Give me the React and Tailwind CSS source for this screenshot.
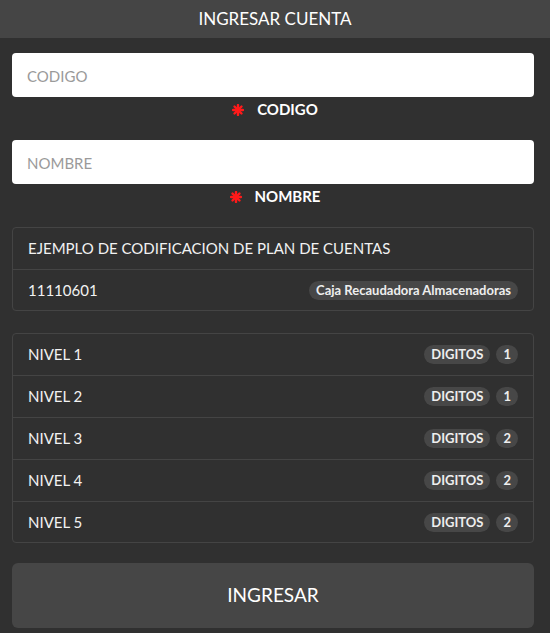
const niveles = [
  { nivel: 'NIVEL 1', digitos: 1 },
  { nivel: 'NIVEL 2', digitos: 1 },
  { nivel: 'NIVEL 3', digitos: 2 },
  { nivel: 'NIVEL 4', digitos: 2 },
  { nivel: 'NIVEL 5', digitos: 2 },
]

function Asterisk() {
  return (
    <svg width="12" height="12" viewBox="0 0 12 12" className="shrink-0">
      <g stroke="#ff1a1a" strokeWidth="2.4" strokeLinecap="round">
        <line x1="6" y1="1" x2="6" y2="11" />
        <line x1="1" y1="6" x2="11" y2="6" />
        <line x1="2.5" y1="2.5" x2="9.5" y2="9.5" />
        <line x1="9.5" y1="2.5" x2="2.5" y2="9.5" />
      </g>
    </svg>
  )
}

function Field({ placeholder, label }) {
  return (
    <div className="mb-[19px]">
      <input
        className="w-full h-[44px] bg-white rounded-[4px] px-[15px] pt-[1px] text-[15px] text-gray-700 placeholder:text-[#9a9a9a] outline-none"
        placeholder={placeholder}
      />
      <div className="flex items-center justify-center gap-[13px] h-[24px] pt-[1px] pl-[4px]">
        <Asterisk />
        <span className="text-[15px] font-bold text-white">{label}</span>
      </div>
    </div>
  )
}

function Badge({ children }) {
  return (
    <span className="inline-flex items-center h-[19px] px-[7px] rounded-full bg-[#474747] text-[13px] font-bold text-[#eeeeee] leading-none">
      {children}
    </span>
  )
}

export default function App() {
  return (
    <div className="w-[550px] h-[633px] bg-[#303030] text-[#f2f2f2]" style={{ fontFamily: 'Lato, "Open Sans", sans-serif' }}>
      <header className="h-[38px] bg-[#454545] flex items-center justify-center">
        <h1 className="text-[17px] text-white">INGRESAR CUENTA</h1>
      </header>

      <div className="pl-[12px] pr-[16px] pt-[15px]">
        <Field placeholder="CODIGO" label="CODIGO" />
        <Field placeholder="NOMBRE" label="NOMBRE" />

        {/* Ejemplo */}
        <div className="border border-[#444] rounded-[4px]">
          <div className="h-[42px] flex items-center px-[15px] border-b border-[#444] text-[15px]">
            EJEMPLO DE CODIFICACION DE PLAN DE CUENTAS
          </div>
          <div className="h-[40px] flex items-center justify-between px-[15px] text-[15px]">
            <span>11110601</span>
            <Badge>Caja Recaudadora Almacenadoras</Badge>
          </div>
        </div>

        {/* Niveles */}
        <div className="border border-[#444] rounded-[4px] mt-[22px]">
          {niveles.map((n, i) => (
            <div
              key={n.nivel}
              className={`flex items-center justify-between px-[15px] text-[15px] ${i < niveles.length - 1 ? 'h-[42px] border-b border-[#444]' : 'h-[40px]'}`}
            >
              <span>{n.nivel}</span>
              <div className="flex items-center gap-[6px]">
                <Badge>DIGITOS</Badge>
                <Badge>{n.digitos}</Badge>
              </div>
            </div>
          ))}
        </div>

        <button className="mt-[20px] w-full h-[65px] bg-[#464646] rounded-[6px] text-[19px] text-white">
          INGRESAR
        </button>
      </div>
    </div>
  )
}
